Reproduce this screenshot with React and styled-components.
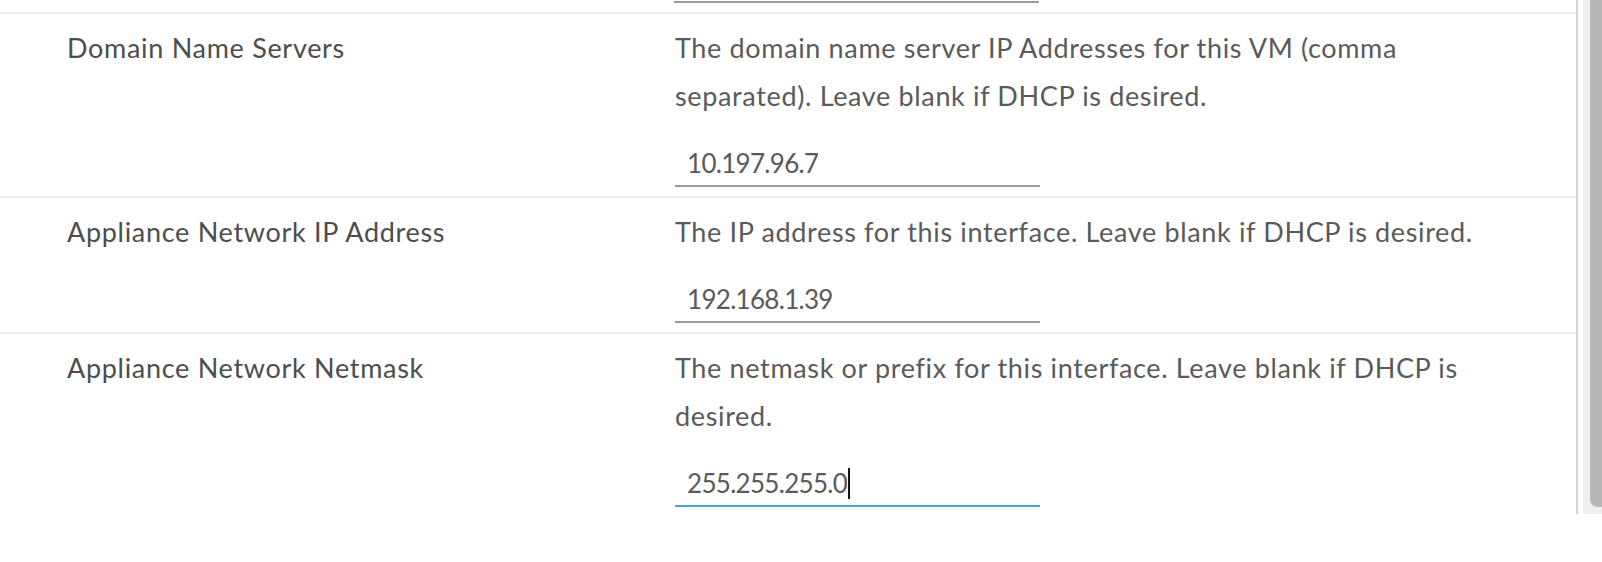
import React from 'react';
import styled, { createGlobalStyle } from 'styled-components';

const GlobalStyle = createGlobalStyle`
  html, body {
    margin: 0;
    padding: 0;
    background: #ffffff;
  }
  body {
    font-family: Lato, "Open Sans", sans-serif;
  }
`;

const Page = styled.div`
  display: flex;
  align-items: flex-start;
  width: 1602px;
  height: 562px;
  overflow: hidden;
`;

const Panel = styled.div`
  width: 1576px;
  height: 514px;
  border-right: 2px solid #d2d2d2;
  overflow: hidden;
`;

const Track = styled.div`
  width: 19px;
  height: 514px;
  margin-left: 5px;
  background: #efefef;
`;

const Thumb = styled.div`
  width: 12px;
  height: 507px;
  margin-left: 7px;
  background: #b7b7b7;
  border-bottom-left-radius: 8px;
`;

const Stub = styled.div`
  height: 12px;
  padding: 1px 0 0 674px;
  box-sizing: border-box;
`;

const StubLine = styled.div`
  width: 365px;
  height: 2px;
  background: #9a9a9a;
`;

const Row = styled.div`
  display: grid;
  grid-template-columns: 608px 1fr;
  padding: 10px 0 ${({ $last }) => ($last ? '7px' : '9px')} 67px;
  border-top: 2px solid #ededed;
`;

const Label = styled.div`
  font-size: 27px;
  line-height: 48px;
  letter-spacing: 0.7px;
  color: #4d4d4d;
`;

const Body = styled.div`
  display: flex;
  flex-direction: column;
  align-items: flex-start;
`;

const Help = styled.p`
  margin: 0;
  width: 830px;
  font-size: 27px;
  line-height: 48px;
  letter-spacing: 0.65px;
  color: #5a5a5a;
`;

const Field = styled.div`
  display: flex;
  align-items: center;
  width: 365px;
  height: 50px;
  margin-top: 17px;
  padding: 4px 12px 0;
  box-sizing: border-box;
  border-bottom: 2px solid ${({ $active }) => ($active ? '#47a1da' : '#9a9a9a')};
`;

const Input = styled.input`
  field-sizing: content;
  min-width: 4px;
  padding: 0;
  border: none;
  outline: none;
  background: transparent;
  font-family: inherit;
  font-size: 26px;
  letter-spacing: -0.7px;
  color: #5a5a5a;
`;

const Caret = styled.span`
  width: 2px;
  height: 31px;
  margin-left: 1px;
  background: #111;
`;

const rows = [
  {
    label: 'Domain Name Servers',
    help: 'The domain name server IP Addresses for this VM (comma separated). Leave blank if DHCP is desired.',
    value: '10.197.96.7',
  },
  {
    label: 'Appliance Network IP Address',
    help: 'The IP address for this interface. Leave blank if DHCP is desired.',
    value: '192.168.1.39',
  },
  {
    label: 'Appliance Network Netmask',
    help: 'The netmask or prefix for this interface. Leave blank if DHCP is desired.',
    value: '255.255.255.0',
    active: true,
  },
];

export default function App() {
  return (
    <>
      <GlobalStyle />
      <Page>
        <Panel>
          <Stub>
            <StubLine />
          </Stub>
          {rows.map((r, i) => (
            <Row key={r.label} $last={i === rows.length - 1}>
              <Label>{r.label}</Label>
              <Body>
                <Help>{r.help}</Help>
                <Field $active={r.active}>
                  <Input defaultValue={r.value} readOnly />
                  {r.active && <Caret />}
                </Field>
              </Body>
            </Row>
          ))}
        </Panel>
        <Track>
          <Thumb />
        </Track>
      </Page>
    </>
  );
}
